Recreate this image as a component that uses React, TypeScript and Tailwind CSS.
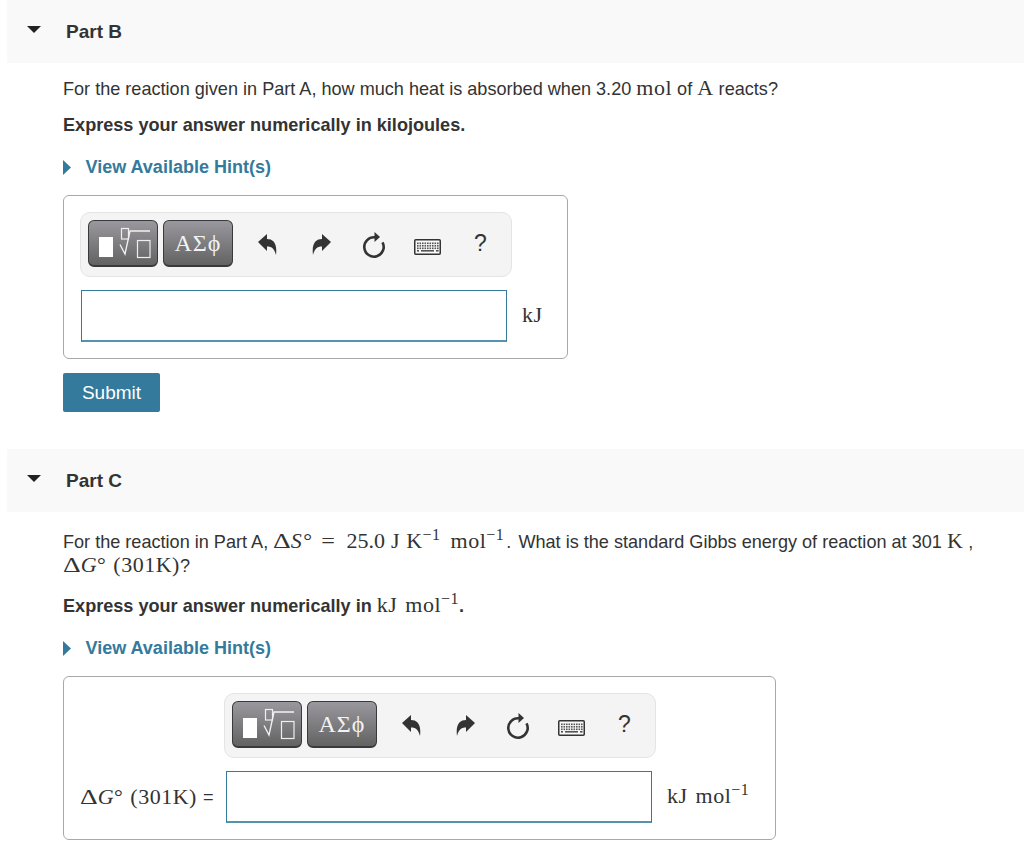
import type { ReactNode } from 'react'

function M({ children, className = '' }: { children: ReactNode; className?: string }) {
  return (
    <span className={`font-['Liberation_Serif',serif] text-[22px] leading-none font-normal tracking-[0.5px] ${className}`}>
      {children}
    </span>
  )
}

function Inv() {
  return <sup className="text-[16px] leading-none">−1</sup>
}

function Delta() {
  return <span className="mr-[3px] inline-block origin-left scale-x-125">Δ</span>
}

function KjPerMol() {
  return (
    <M>
      kJ<span className="ml-[8px]">mol</span>
      <Inv />
    </M>
  )
}

function DeltaG() {
  return (
    <M>
      <Delta />
      <i>G</i>°<span className="ml-[7px]">(301K)</span>
    </M>
  )
}

function PartHeader({ title }: { title: string }) {
  return (
    <div className="ml-[7px] flex h-[63px] items-center bg-[#f9f9f9]">
      <svg width="14" height="7" viewBox="0 0 14 7" className="ml-[20px] mt-[-4px]">
        <path d="M0 0H14L7 7Z" fill="#222" />
      </svg>
      <h2 className="ml-[25px] text-[19px] font-bold text-[#333]">{title}</h2>
    </div>
  )
}

function HintLink() {
  return (
    <div className="flex h-[23px] items-center text-[18px] font-bold text-[#337a9c]">
      <svg width="8" height="15" viewBox="0 0 8 15">
        <path d="M0 0L8 7.5L0 15Z" fill="#337a9c" />
      </svg>
      <span className="ml-[14.500px]">View Available Hint(s)</span>
    </div>
  )
}

function TemplateIcon() {
  return (
    <svg width="68" height="46" viewBox="0 0 68 46" fill="none">
      <rect x="10" y="17" width="14" height="20" fill="#fff" />
      <rect x="32.500" y="8.500" width="7" height="10.500" stroke="#eee" strokeWidth="1.200" />
      <path d="M31 24.500L36 34L41 11H61" stroke="#f2f2f2" strokeWidth="1.300" />
      <rect x="48.500" y="20.500" width="12.500" height="17" stroke="#eee" strokeWidth="1.200" />
    </svg>
  )
}

function UndoIcon({ flip = false }: { flip?: boolean }) {
  return (
    <svg width="19" height="21" viewBox="0 0 19 21" className={flip ? '-scale-x-100' : ''}>
      <path d="M0 8L9 0V5C15 5 19.500 9 18 21C16.500 15 14 12.500 9 12.500V17Z" fill="#333" />
    </svg>
  )
}

function ResetIcon() {
  return (
    <svg width="24" height="26" viewBox="0 0 24 26" fill="none">
      <path d="M13 5.300A9.700 9.700 0 1 0 20.500 10.300" stroke="#333" strokeWidth="2.600" />
      <path d="M12.500 0L18 5L12.500 10Z" fill="#333" />
    </svg>
  )
}

function KeyboardIcon() {
  const rows = [3.5, 6, 8.500]
  const keys = [3, 5.500, 8, 10.500, 13, 15.500, 18, 20.500, 23]
  return (
    <svg width="27" height="16" viewBox="0 0 27 16" fill="none">
      <rect x="0.750" y="0.750" width="25.500" height="14.500" rx="1" fill="#f8f8f8" stroke="#333" strokeWidth="1.500" />
      {rows.map((y) =>
        keys.map((x) => <rect key={`${x}-${y}`} x={x} y={y} width="1.600" height="1.600" fill="#555" />),
      )}
      <rect x="7" y="11" width="13" height="1.600" fill="#555" />
      <rect x="3" y="11" width="2" height="1.600" fill="#555" />
      <rect x="22" y="11" width="2.600" height="1.600" fill="#555" />
    </svg>
  )
}

function Toolbar() {
  const btn =
    'mt-[-2px] flex h-[47px] w-[70px] items-center justify-center rounded-[6px] border border-b-2 border-[#3a3a3a] bg-gradient-to-b from-[#9a989e] to-[#636363]'
  return (
    <div className="flex h-[65px] w-[432px] items-center rounded-[10px] border border-[#e4e4e4] bg-[#f4f4f4] pl-[7px]">
      <div className={btn}>
        <TemplateIcon />
      </div>
      <div className={`${btn} ml-[5px] font-['Liberation_Serif',serif] text-[24px] tracking-[1px] text-[#f2f2f2]`}>
        ΑΣϕ
      </div>
      <div className="ml-[24px] flex w-[20px] justify-center">
        <UndoIcon />
      </div>
      <div className="ml-[34px] flex w-[20px] justify-center">
        <UndoIcon flip />
      </div>
      <div className="ml-[31px] flex w-[24px] justify-center">
        <ResetIcon />
      </div>
      <div className="ml-[28px] mt-[4px] flex w-[27px] justify-center">
        <KeyboardIcon />
      </div>
      <div className="ml-[33px] mt-[-2px] font-['Liberation_Sans',sans-serif] text-[23px] text-[#333]">?</div>
    </div>
  )
}

function AnswerRow({ label, unit }: { label?: ReactNode; unit: ReactNode }) {
  return (
    <div className="flex items-center">
      {label}
      <div className="h-[52px] w-[426px] border border-b-2 border-[#337a9c] border-b-[#5592ad] bg-white" />
      <div className="ml-[15px]">{unit}</div>
    </div>
  )
}

function Panel({ className, children }: { className: string; children: ReactNode }) {
  return <div className={`mt-[16px] ml-[63px] rounded-[6px] border border-[#a8a8a8] ${className}`}>{children}</div>
}

export default function App() {
  return (
    <div className="h-[847px] w-[1024px] overflow-hidden bg-white font-['Liberation_Sans',sans-serif] text-[18.100px] leading-[23px] text-[#333]">
      <PartHeader title="Part B" />
      <div className="pl-[63px]">
        <p className="mt-[14px] h-[23px]">
          For the reaction given in Part A, how much heat is absorbed when 3.20 <M>mol</M> of <M>A</M> reacts?
        </p>
        <p className="mt-[14px] font-bold">Express your answer numerically in kilojoules.</p>
        <div className="mt-[19px]">
          <HintLink />
        </div>
      </div>
      <Panel className="h-[164px] w-[505px] pl-[17px] pt-[16px]">
        <div className="-ml-px">
          <Toolbar />
        </div>
        <div className="mt-[13px]">
          <AnswerRow unit={<M>kJ</M>} />
        </div>
      </Panel>
      <button className="mt-[14px] ml-[63px] block h-[39px] w-[97px] rounded-[2px] bg-[#337a9c] text-[19px] text-white">
        Submit
      </button>

      <div className="mt-[37px]">
        <PartHeader title="Part C" />
      </div>
      <div className="pl-[63px]">
        <p className="mt-[18px] h-[46px]">
          For the reaction in Part A,{' '}
          <M>
            <Delta />
            <i>S</i>
            <span className="ml-[1px]">°</span>
            <span className="ml-[9px] mr-[12px] inline-block scale-x-110">=</span>
            <span className="tracking-normal">25.0</span> J K<Inv />
            <span className="ml-[10px]">mol</span>
            <Inv />
          </M>
          <span className="mx-[2px]">.</span> What is the standard Gibbs energy of reaction at 301 <M>K</M> ,<br />
          <DeltaG />?
        </p>
        <p className="mt-[18px] h-[23px] font-bold">
          Express your answer numerically in <KjPerMol />.
        </p>
        <div className="mt-[20px]">
          <HintLink />
        </div>
      </div>
      <Panel className="h-[164px] w-[713px] pt-[16px]">
        <div className="ml-[160px]">
          <Toolbar />
        </div>
        <div className="mt-[13px] ml-[16px]">
          <AnswerRow
            label={
              <div className="flex w-[146px] items-center">
                <DeltaG />
                <span className="ml-[6px]">=</span>
              </div>
            }
            unit={<KjPerMol />}
          />
        </div>
      </Panel>
    </div>
  )
}
